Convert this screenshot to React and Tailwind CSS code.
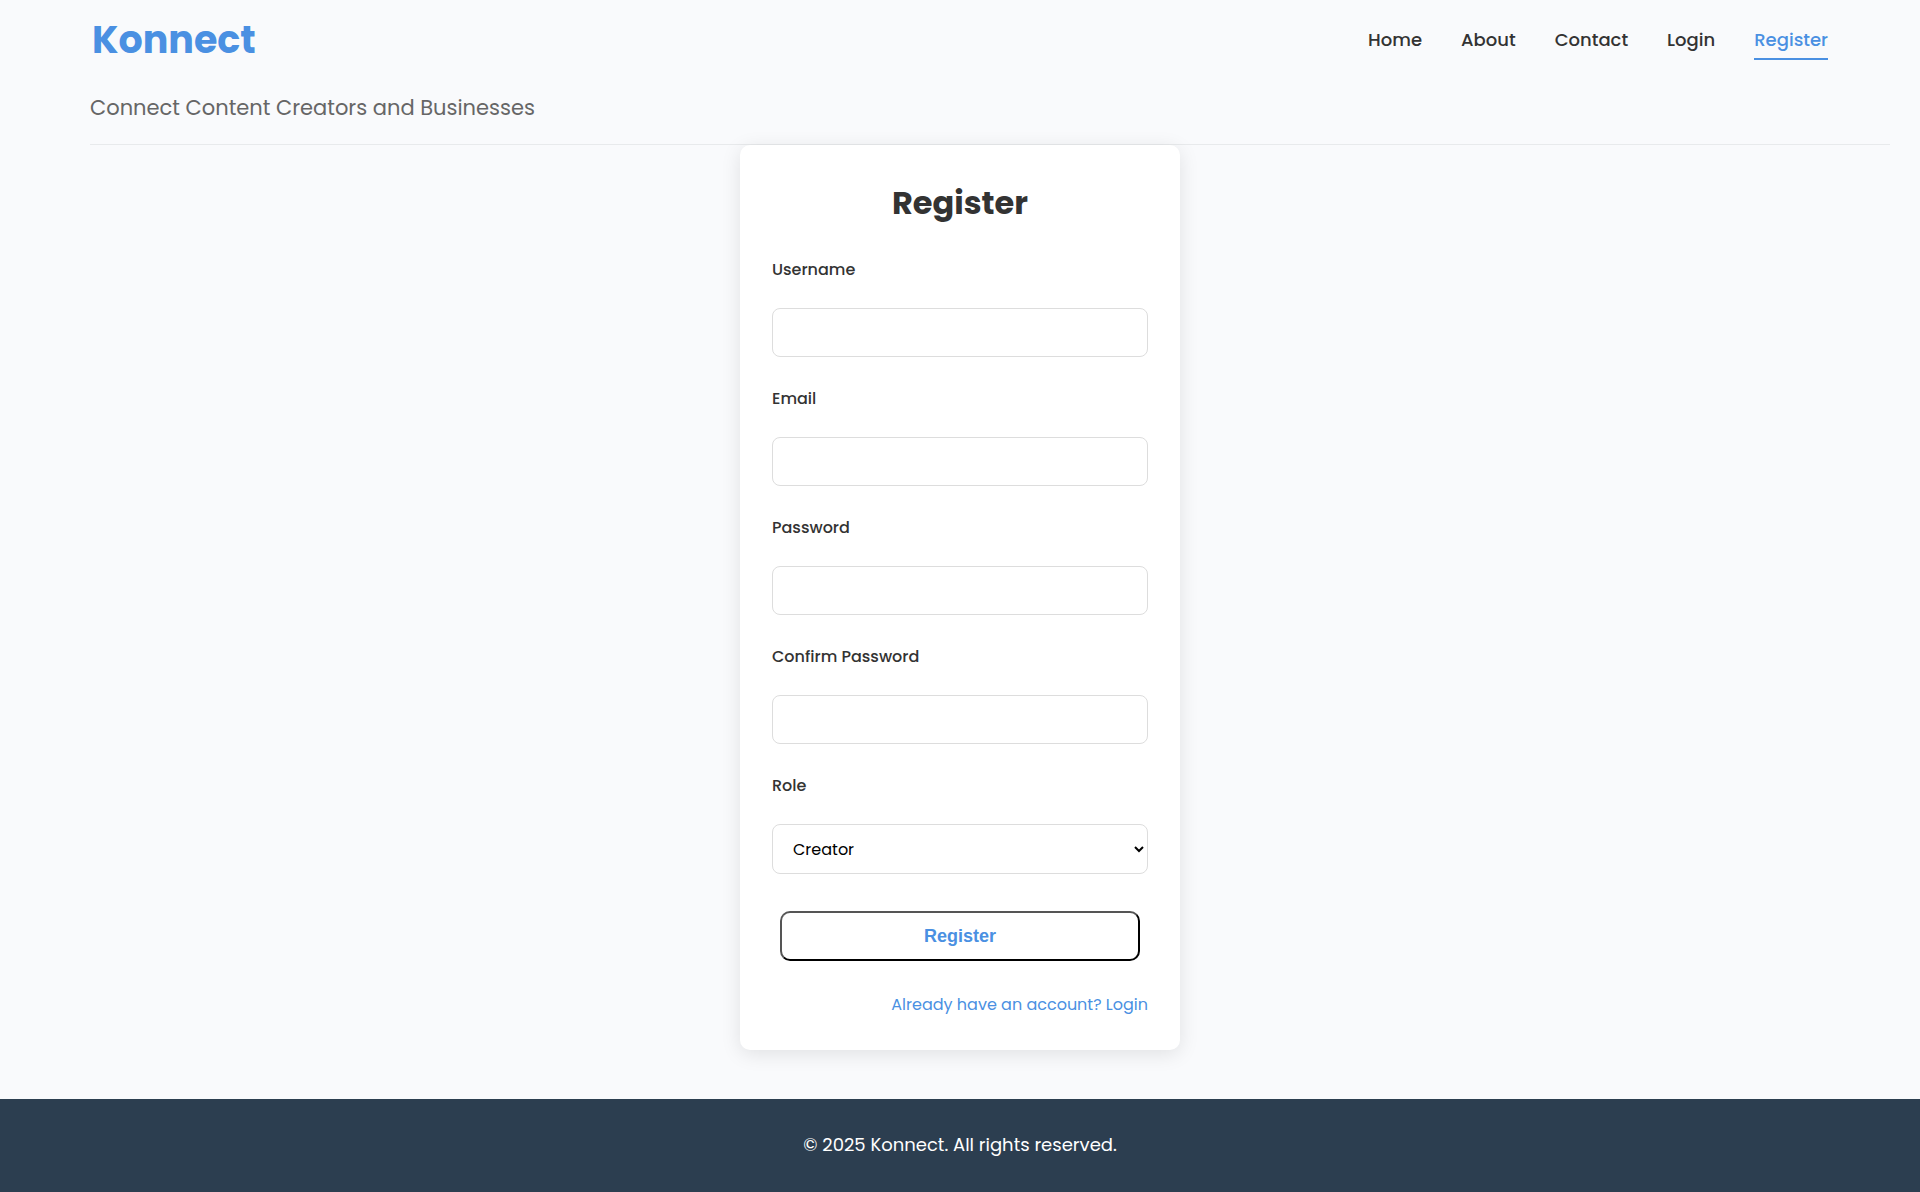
const NAV = [
  { label: "Home", href: "#home" },
  { label: "About", href: "#about" },
  { label: "Contact", href: "#contact" },
  { label: "Login", href: "#login" },
  { label: "Register", href: "#register", active: true },
];

const FIELDS = [
  { id: "username", label: "Username", type: "text" },
  { id: "email", label: "Email", type: "email" },
  { id: "password", label: "Password", type: "password" },
  { id: "confirm-password", label: "Confirm Password", type: "password" },
];

function Header() {
  return (
    <header className="mr-[30px] ml-[90px] border-b border-[#e8eaec]">
      <div className="flex h-20 items-center justify-between pr-[62px] pl-0.5">
        <a href="#home" className="text-[38px] leading-none font-bold text-[#4a90e2]">
          Konnect
        </a>
        <nav aria-label="Main" className="flex gap-[39px]">
          {NAV.map((item) => (
            <a
              key={item.label}
              href={item.href}
              aria-current={item.active ? "page" : undefined}
              className={
                item.active
                  ? "border-b-2 border-[#4a90e2] pt-1.5 pb-1 text-lg font-medium text-[#4a90e2]"
                  : "border-b-2 border-transparent pt-1.5 pb-1 text-lg font-medium text-[#333]"
              }
            >
              {item.label}
            </a>
          ))}
        </nav>
      </div>
      <p className="h-16 pt-3 text-[21px] leading-8 text-[#666]">
        Connect Content Creators and Businesses
      </p>
    </header>
  );
}

function Field({ id, label, children }) {
  return (
    <div className="flex flex-col gap-[26px]">
      <label htmlFor={id} className="text-base leading-6 font-medium text-[#333]">
        {label}
      </label>
      {children}
    </div>
  );
}

function RegisterCard() {
  return (
    <main className="relative mx-auto w-full max-w-[440px] rounded-[10px] bg-white px-8 pt-[34px] pb-[33px] shadow-[0_4px_20px_rgba(0,0,0,0.1)]">
      <h1 className="mb-[31px] text-center text-[32px] leading-12 font-bold text-[#333]">
        Register
      </h1>
      <form className="flex flex-col gap-[30px]" onSubmit={(e) => e.preventDefault()}>
        {FIELDS.map((f) => (
          <Field key={f.id} id={f.id} label={f.label}>
            <input
              id={f.id}
              name={f.id}
              type={f.type}
              className="h-[49px] w-full rounded-lg border border-[#ddd] bg-white px-4 text-base text-black"
            />
          </Field>
        ))}
        <Field id="role" label="Role">
          <select
            id="role"
            name="role"
            defaultValue="creator"
            className="h-[50px] w-full rounded-lg border border-[#ddd] bg-white pl-4 text-base text-black"
          >
            <option value="creator">Creator</option>
            <option value="business">Business</option>
          </select>
        </Field>
        <button
          type="submit"
          className="mx-2 mt-[7px] h-[50px] rounded-[10px] border-2 border-t-[#555] border-r-black border-b-black border-l-[#555] bg-white font-['Liberation_Sans',Arial,sans-serif] text-lg font-bold text-[#4a90e2]"
        >
          Register
        </button>
      </form>
      <p className="mt-8 text-right text-base leading-6">
        <a href="#login" className="text-[#4a90e2]">
          Already have an account? Login
        </a>
      </p>
    </main>
  );
}

export default function App() {
  return (
    <div className="flex min-h-screen flex-col bg-[#f9fafc] font-[Poppins,Inter,sans-serif]">
      <Header />
      <RegisterCard />
      <footer className="mt-[49px] grow bg-[#2c3e50] py-8 text-center text-lg leading-7 text-white">
        <p>© 2025 Konnect. All rights reserved.</p>
      </footer>
    </div>
  );
}
